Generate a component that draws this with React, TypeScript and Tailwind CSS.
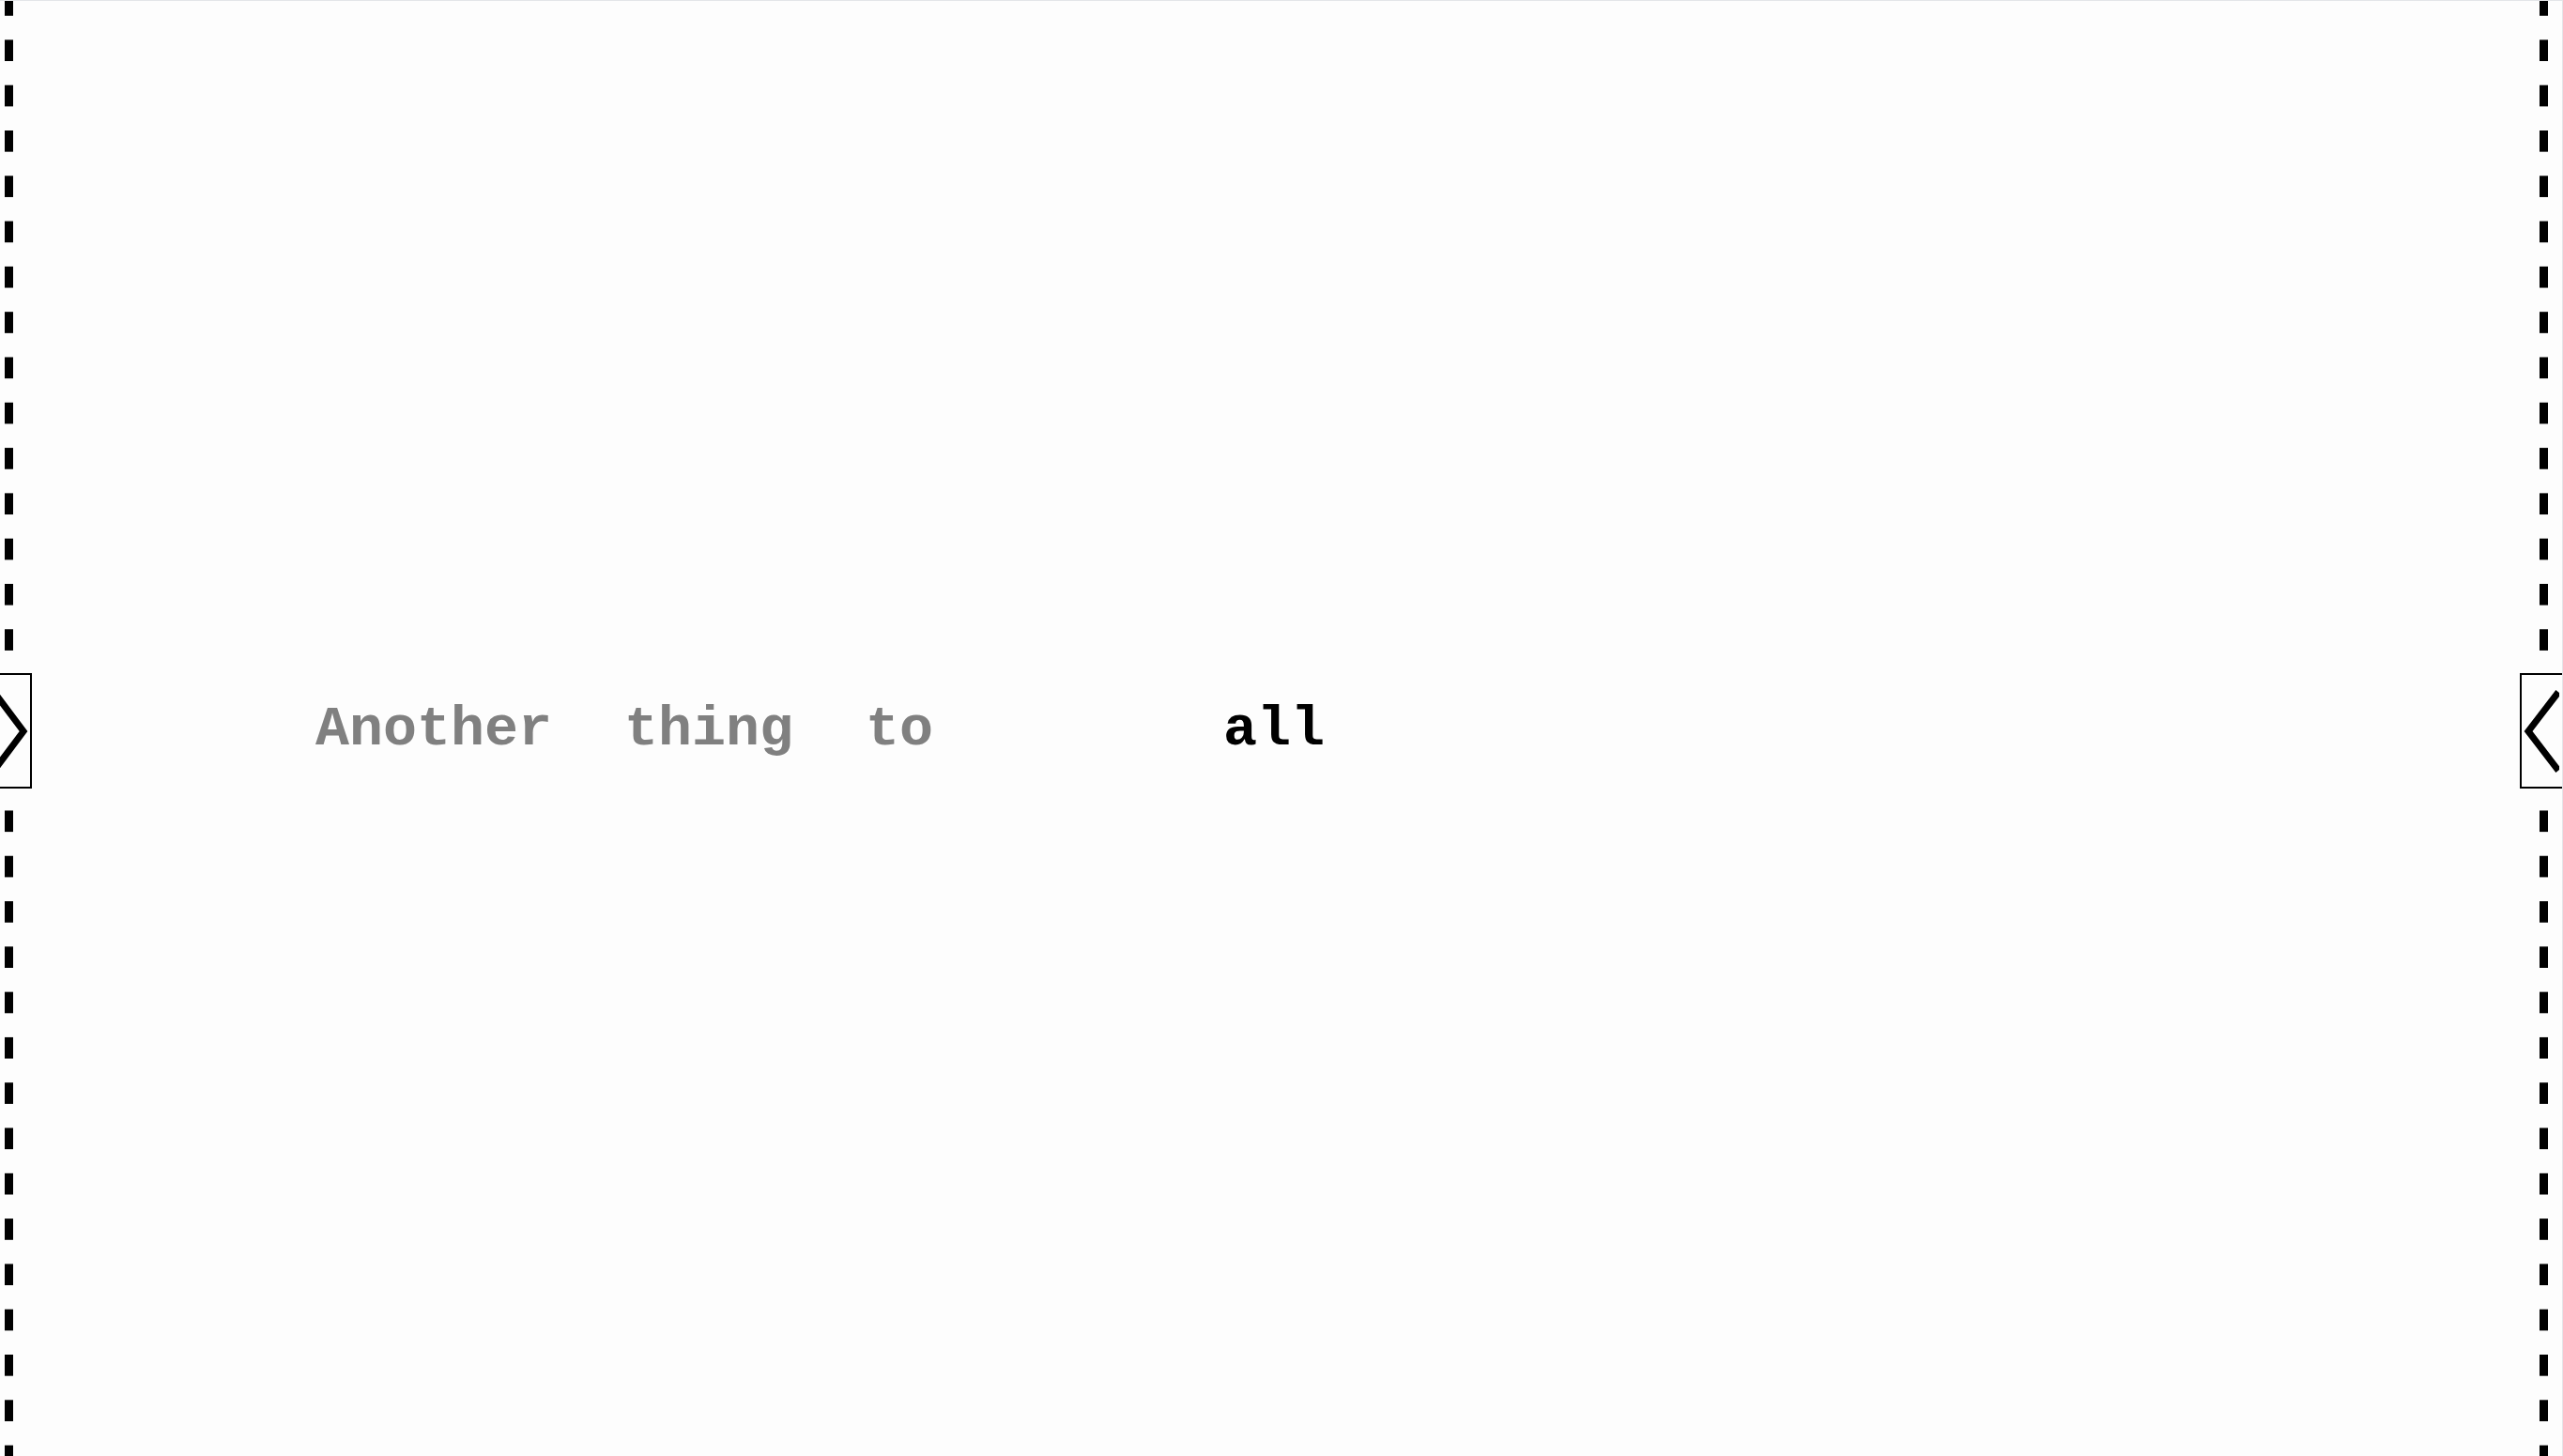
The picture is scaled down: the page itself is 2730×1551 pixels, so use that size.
import React from "react";

function Chevron({ dir }: { dir: "left" | "right" }) {
  return (
    <svg width="40" height="90" viewBox="0 0 40 90" className="block">
      {dir === "right" ? (
        <polyline points="4,5 34,45 4,85" fill="none" stroke="#000" strokeWidth="7" strokeLinecap="square" strokeLinejoin="miter" />
      ) : (
        <polyline points="37,6 7,45 37,84" fill="none" stroke="#000" strokeWidth="7" strokeLinecap="square" strokeLinejoin="miter" />
      )}
    </svg>
  );
}

export default function App() {
  const dash =
    "bg-[linear-gradient(to_bottom,#000_0px,#000_16px,transparent_16px,transparent_41.7px,#000_41.7px,#000_48.3px)] bg-[length:9px_48.3px] bg-repeat-y";
  return (
    <div className="relative w-[2730px] h-[1551px] overflow-hidden bg-[#fdfdfd] border-t border-r border-[#e3e5e8]">
      <div className={`absolute left-[5px] top-0 w-[9px] h-full ${dash}`} />
      <div className={`absolute left-[2705px] top-0 w-[9px] h-full ${dash}`} />

      <div className="absolute left-[-14px] top-[716px] w-[48px] h-[123px] border-[2.5px] border-black bg-[#fdfdfd] flex items-center">
        <div className="ml-[3px]">
          <Chevron dir="right" />
        </div>
      </div>
      <div className="absolute left-[2684px] top-[716px] w-[60px] h-[123px] border-[2.5px] border-black bg-[#fdfdfd] flex items-center">
        <div className="ml-[0px]">
          <Chevron dir="left" />
        </div>
      </div>

      <div className="flex h-full items-center pl-[336px] pt-[2px]">
        <div className="flex items-baseline gap-[77px] font-bold text-[60px] leading-none font-['Courier_New','Nimbus_Mono_PS','FreeMono','Courier','Liberation_Mono',monospace]">
          <span className="text-[#808080]">Another</span>
          <span className="text-[#808080]">thing</span>
          <span className="text-[#808080]">to</span>
          <span className="text-black ml-[232px]">all</span>
        </div>
      </div>
    </div>
  );
}
